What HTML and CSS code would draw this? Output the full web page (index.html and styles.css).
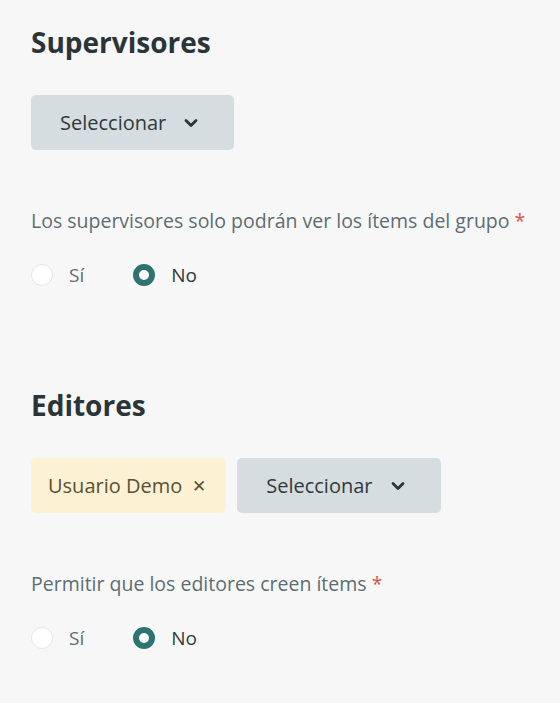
FILE: index.html
```html
<!DOCTYPE html>
<html lang="es">
<head>
  <meta charset="UTF-8" />
  <title>Permisos del grupo</title>
  <meta name="viewport" content="width=device-width, initial-scale=1.0" />
  <link rel="stylesheet" href="styles.css">
</head>
<body>
  <div class="panel">
    <section class="group">
      <h2 class="group-title">Supervisores</h2>
      <div class="pickers">
        <button class="select-btn">Seleccionar
          <svg class="chevron" viewBox="0 0 14 10" width="14" height="10"><path d="M2 2.5l5 5 5-5" fill="none" stroke="currentColor" stroke-width="2.8" stroke-linecap="round" stroke-linejoin="round"/></svg>
        </button>
      </div>
      <p class="field-label">Los supervisores solo podrán ver los ítems del grupo <span class="req">*</span></p>
      <div class="radios">
        <label class="radio"><span class="dot"></span>Sí</label>
        <label class="radio checked"><span class="dot"></span>No</label>
      </div>
    </section>

    <section class="group">
      <h2 class="group-title">Editores</h2>
      <div class="pickers">
        <span class="tag">Usuario Demo <span class="tag-x">✕</span></span>
        <button class="select-btn">Seleccionar
          <svg class="chevron" viewBox="0 0 14 10" width="14" height="10"><path d="M2 2.5l5 5 5-5" fill="none" stroke="currentColor" stroke-width="2.8" stroke-linecap="round" stroke-linejoin="round"/></svg>
        </button>
      </div>
      <p class="field-label">Permitir que los editores creen ítems <span class="req">*</span></p>
      <div class="radios">
        <label class="radio"><span class="dot"></span>Sí</label>
        <label class="radio checked"><span class="dot"></span>No</label>
      </div>
    </section>
  </div>
</body>
</html>
```

FILE: styles.css
```css
body {
  margin: 0;
  background: #f7f7f7;
  font-family: "Open Sans", Arial, sans-serif;
  color: #2f3a3e;
}

.panel {
  padding: 24px 31px 0;
}

.group + .group {
  margin-top: 99px;
}

.group-title {
  margin: 0;
  font-size: 28px;
  font-weight: 700;
  line-height: 36px;
  color: #2b3538;
}

.pickers {
  display: flex;
  gap: 11px;
  margin-top: 35px;
}

.select-btn {
  display: flex;
  align-items: center;
  gap: 18px;
  height: 55px;
  padding: 0 36px 0 29px;
  border: none;
  border-radius: 5px;
  background: #d5dde0;
  font-family: inherit;
  font-size: 20px;
  color: #2f3a3e;
}

.chevron {
  color: #2b3538;
}

.tag {
  display: flex;
  align-items: center;
  gap: 10px;
  height: 55px;
  padding: 0 20px 0 17px;
  border-radius: 5px;
  background: #fcf1d3;
  font-size: 20px;
  color: #5a5034;
}

.tag-x {
  font-size: 17px;
  color: #5a5034;
}

.field-label {
  margin: 58px 0 0;
  font-size: 19.5px;
  line-height: 26px;
  color: #5d6d72;
}

.req {
  color: #d9534f;
}

.radios {
  display: flex;
  gap: 49px;
  margin-top: 28px;
}

.radio {
  display: flex;
  align-items: center;
  gap: 16px;
  font-size: 19px;
  color: #5d6d72;
}

.radio.checked {
  color: #2f3a3e;
}

.dot {
  box-sizing: border-box;
  width: 22px;
  height: 22px;
  border-radius: 50%;
  background: #fff;
  border: 1px solid #e3e6e7;
}

.radio.checked .dot {
  border: 6px solid #2e7371;
}
```
